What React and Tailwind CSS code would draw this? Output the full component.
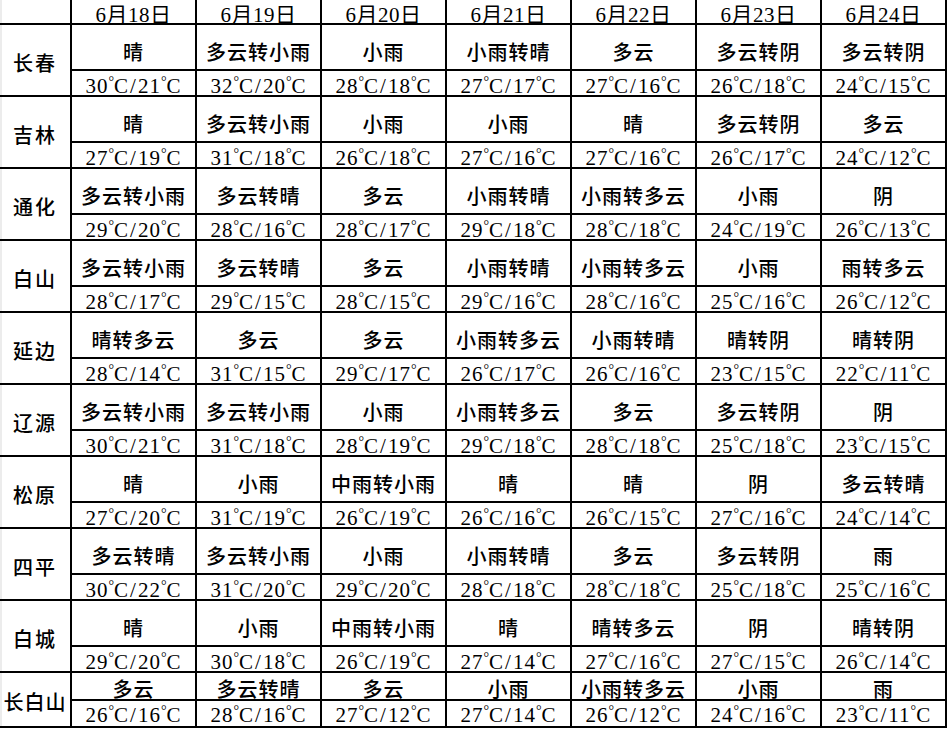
const dates = ["6月18日", "6月19日", "6月20日", "6月21日", "6月22日", "6月23日", "6月24日"];

const cities = [
  {
    name: "长春",
    weather: ["晴", "多云转小雨", "小雨", "小雨转晴", "多云", "多云转阴", "多云转阴"],
    temps: ["30/21", "32/20", "28/18", "27/17", "27/16", "26/18", "24/15"],
  },
  {
    name: "吉林",
    weather: ["晴", "多云转小雨", "小雨", "小雨", "晴", "多云转阴", "多云"],
    temps: ["27/19", "31/18", "26/18", "27/16", "27/16", "26/17", "24/12"],
  },
  {
    name: "通化",
    weather: ["多云转小雨", "多云转晴", "多云", "小雨转晴", "小雨转多云", "小雨", "阴"],
    temps: ["29/20", "28/16", "28/17", "29/18", "28/18", "24/19", "26/13"],
  },
  {
    name: "白山",
    weather: ["多云转小雨", "多云转晴", "多云", "小雨转晴", "小雨转多云", "小雨", "雨转多云"],
    temps: ["28/17", "29/15", "28/15", "29/16", "28/16", "25/16", "26/12"],
  },
  {
    name: "延边",
    weather: ["晴转多云", "多云", "多云", "小雨转多云", "小雨转晴", "晴转阴", "晴转阴"],
    temps: ["28/14", "31/15", "29/17", "26/17", "26/16", "23/15", "22/11"],
  },
  {
    name: "辽源",
    weather: ["多云转小雨", "多云转小雨", "小雨", "小雨转多云", "多云", "多云转阴", "阴"],
    temps: ["30/21", "31/18", "28/19", "29/18", "28/18", "25/18", "23/15"],
  },
  {
    name: "松原",
    weather: ["晴", "小雨", "中雨转小雨", "晴", "晴", "阴", "多云转晴"],
    temps: ["27/20", "31/19", "26/19", "26/16", "26/15", "27/16", "24/14"],
  },
  {
    name: "四平",
    weather: ["多云转晴", "多云转小雨", "小雨", "小雨转晴", "多云", "多云转阴", "雨"],
    temps: ["30/22", "31/20", "29/20", "28/18", "28/18", "25/18", "25/16"],
  },
  {
    name: "白城",
    weather: ["晴", "小雨", "中雨转小雨", "晴", "晴转多云", "阴", "晴转阴"],
    temps: ["29/20", "30/18", "26/19", "27/14", "27/16", "27/15", "26/14"],
  },
  {
    name: "长白山",
    weather: ["多云", "多云转晴", "多云", "小雨", "小雨转多云", "小雨", "雨"],
    temps: ["26/16", "28/16", "27/12", "27/14", "26/12", "24/16", "23/11"],
  },
];

// 摄氏度：小圆圈 + 衬线 C，宽度接近全角
function Deg() {
  return (
    <span className="inline-flex items-start">
      <span className="text-[14px] -mr-[1px] -translate-y-[1px]">°</span>
      <span>C</span>
    </span>
  );
}

function Temp({ value }) {
  const [hi, lo] = value.split("/");
  return (
    <>
      {hi}
      <Deg />
      <span className="px-[1px]">/</span>
      {lo}
      <Deg />
    </>
  );
}

export default function App() {
  return (
    <div className="min-h-screen bg-white w-[952px] h-[734px] overflow-hidden">
      <div className="grid grid-cols-[72px_repeat(7,125px)] grid-rows-[25px_repeat(9,46px_26px)_28px_27px] text-black">
        {/* 表头 */}
        <div className="border-r-2 border-b-2 border-black shadow-[inset_2px_0_0_#ececec]" />
        {dates.map((d) => (
          <div
            key={d}
            className="border-r-2 border-b-2 border-black flex items-center justify-center pt-[8px] text-[21px] leading-none tracking-[0.5px] font-['Liberation_Serif','Noto_Sans_CJK_SC',serif]"
          >
            {d}
          </div>
        ))}

        {cities.map((c, i) => {
          const last = i === cities.length - 1;
          return [
            <div
              key={c.name}
              className={`row-span-2 border-r-2 border-b-2 border-black flex items-center justify-center text-[20px] font-medium leading-none shadow-[inset_2px_0_0_#ececec] font-['Noto_Sans_CJK_SC',sans-serif] ${
                last ? "tracking-[1px] pt-[4px]" : "tracking-[2px] pt-[6px]"
              }`}
            >
              {c.name}
            </div>,
            ...c.weather.map((w, j) => (
              <div
                key={c.name + "w" + j}
                className={`border-r-2 border-b-2 border-black flex items-center justify-center text-[20px] font-medium leading-none tracking-[1px] font-['Noto_Sans_CJK_SC',sans-serif] ${
                  last ? "pt-[5px]" : "pt-[9px]"
                }`}
              >
                {w}
              </div>
            )),
            ...c.temps.map((t, j) => (
              <div
                key={c.name + "t" + j}
                className={`border-r-2 border-b-2 border-black flex items-center justify-center text-[21px] leading-none tracking-[1px] whitespace-nowrap font-['Liberation_Serif',serif] ${
                  last ? "pt-[4px]" : "pt-[6px]"
                }`}
              >
                <Temp value={t} />
              </div>
            )),
          ];
        })}
      </div>
    </div>
  );
}
